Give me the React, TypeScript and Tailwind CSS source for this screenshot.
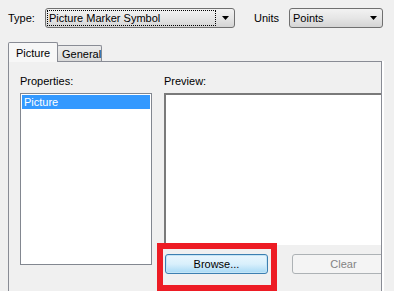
import React from 'react';

function Arrow() {
  return (
    <svg width="7" height="4" viewBox="0 0 7 4" className="shrink-0">
      <path d="M0 0h7L3.5 4z" fill="#000" />
    </svg>
  );
}

function Combo({ value, width, focused = false }: { value: string; width: string; focused?: boolean }) {
  return (
    <div
      className={`${width} h-5 rounded-[3px] border border-[#707070] bg-gradient-to-b from-[#f2f2f2] via-[#e6e6e6] to-[#d4d4d4] flex items-center pl-[1px] pr-[5px]`}
    >
      <div
        className={`flex-1 h-4 flex items-center pl-[1px] ${focused ? 'border border-dotted border-black' : 'border border-transparent'}`}
      >
        {value}
      </div>
      <div className="w-[13px] flex justify-end">
        <Arrow />
      </div>
    </div>
  );
}

export default function App() {
  return (
    <div className="relative w-[394px] h-[291px] overflow-hidden bg-[#f0f0f0] text-[11px] leading-[13px] text-black font-['Liberation_Sans',Arial,sans-serif]">
      {/* top row */}
      <div className="flex items-center h-5 mt-2 pl-2">
        <span className="w-[37px]">Type:</span>
        <Combo value="Picture Marker Symbol" width="w-[190px]" focused />
        <span className="ml-[19px] w-[35px]">Units</span>
        <Combo value="Points" width="w-[94px]" />
      </div>

      {/* tab strip */}
      <div className="flex items-end h-[19px] mt-[14px] ml-2">
        <div className="relative z-10 -mb-px h-5 w-[50px] border border-b-0 border-[#898c95] rounded-t-[2px] bg-[#f7f7f7] pl-[7px] pt-[4px]">
          Picture
        </div>
        <div className="-ml-px h-4 w-[45px] border border-b-0 border-[#898c95] rounded-t-[2px] bg-gradient-to-b from-[#ececec] to-[#d9d9d9] pl-[4px] pt-[2px]">
          General
        </div>
      </div>

      {/* tab page */}
      <div className="ml-2 w-[374px] h-[240px] border border-[#898c95] bg-[#f0f0f0] overflow-hidden shadow-[2px_0_0_#ffffff] flex pt-[13px] pl-[11px]">
        <div className="w-[132px] shrink-0 flex flex-col">
          <div className="h-[13px]">Properties:</div>
          <div className="mt-[5px] h-[172px] border border-[#828790] bg-white p-px">
            <div className="h-[14px] bg-[#3399ff] text-white pl-[2px] leading-[14px]">Picture</div>
          </div>
        </div>
        <div className="ml-[12px] w-[240px] shrink-0 flex flex-col">
          <div className="h-[13px]">Preview:</div>
          <div className="mt-[5px] h-[152px] border-t-2 border-l-2 border-[#7a7a7a] bg-white" />
          <div className="flex mt-[9px] pl-px">
            <div className="w-[103px] h-5 rounded-[3px] border border-[#3c7fb1] bg-gradient-to-b from-[#eaf6fd] via-[#d9f0fc] to-[#a7d9f5] flex items-center justify-center shadow-[inset_0_0_0_1px_#c4e5f6]">
              Browse...
            </div>
            <div className="ml-[24px] w-[103px] h-5 rounded-[3px] border border-[#adb2b5] bg-[#f4f4f4] text-[#838383] flex items-center justify-center">
              Clear
            </div>
          </div>
        </div>
      </div>

      {/* highlight annotation */}
      <div className="absolute left-[157px] top-[243px] w-[120px] h-[48px] border-[6px] border-[#ed1c24]" />
    </div>
  );
}
